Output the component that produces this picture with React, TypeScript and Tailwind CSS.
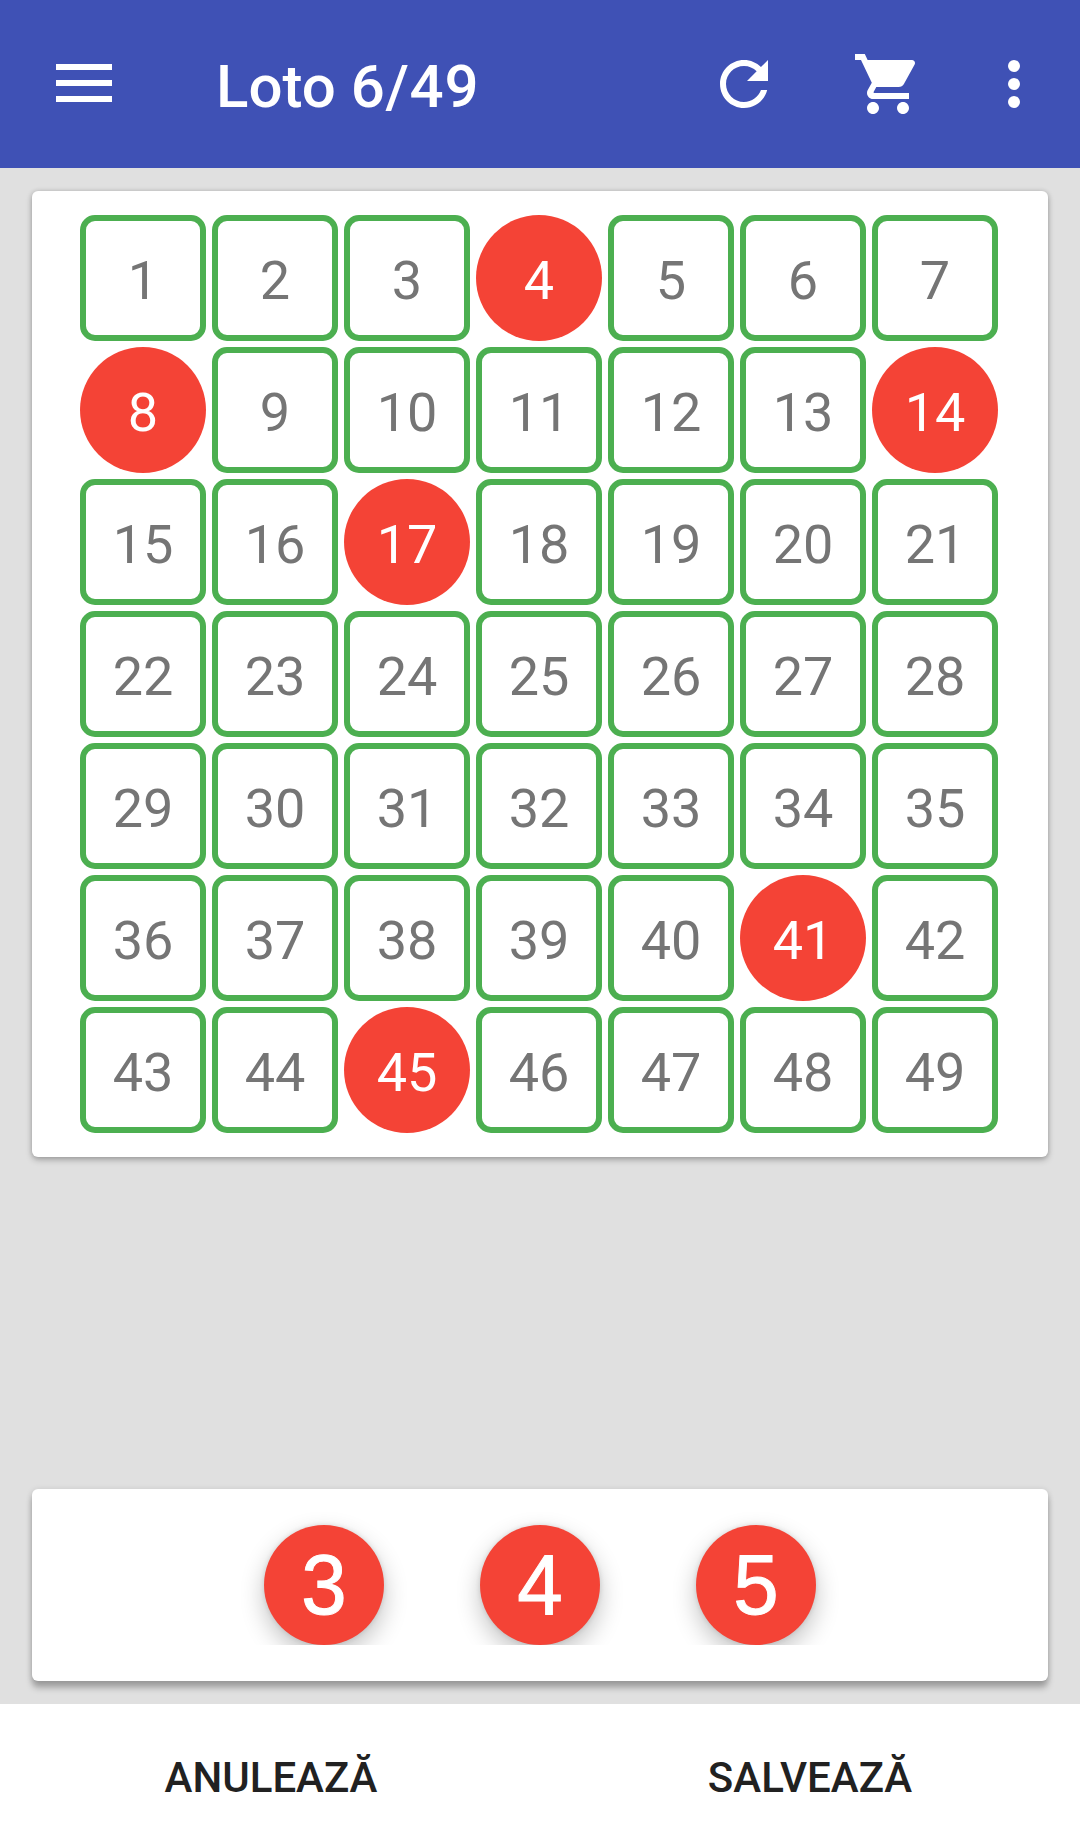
const picked = new Set([4, 8, 14, 17, 41, 45]);
const numbers = Array.from({ length: 49 }, (_, i) => i + 1);

function Cell({ value }: { value: number }) {
  return picked.has(value) ? (
    <button className="flex size-[126px] items-center justify-center rounded-full bg-[#f44336] pt-[5px] text-[54px] leading-none text-white">
      {value}
    </button>
  ) : (
    <button className="flex size-[126px] items-center justify-center rounded-[15px] border-[6px] border-[#4caf50] pt-[5px] text-[54px] leading-none text-[#757575]">
      {value}
    </button>
  );
}

function Ball({ value }: { value: number }) {
  return (
    <div className="flex h-[156px] w-[216px] items-end justify-center overflow-hidden">
      <button className="flex size-[120px] items-center justify-center rounded-full bg-[#f44336] pb-[2px] font-['Liberation_Sans',sans-serif] text-[86px] leading-none text-white shadow-[0_10px_24px_rgba(0,0,0,0.24),0_0_5px_rgba(0,0,0,0.12)] [-webkit-text-stroke:1px_white]">
        <span className="scale-x-[0.95]">{value}</span>
      </button>
    </div>
  );
}

export default function App() {
  return (
    <div className="flex h-[1848px] w-[1080px] flex-col bg-[#e0e0e0] font-[Roboto,sans-serif]">
      <header className="flex h-[168px] shrink-0 items-center bg-[#3f51b5] text-white">
        <button className="mb-[2px] ml-14 flex w-14 flex-col gap-[10px]">
          <span className="h-[6px] w-full bg-white" />
          <span className="h-[6px] w-full bg-white" />
          <span className="h-[6px] w-full bg-white" />
        </button>
        <h1 className="ml-[104px] grow pt-[5px] text-[60px] leading-none font-medium">
          Loto <span className="tracking-[0.7px]">6/49</span>
        </h1>
        <svg viewBox="0 0 24 24" className="size-[72px] fill-white">
          <path d="M17.65 6.35C16.2 4.9 14.21 4 12 4c-4.42 0-7.99 3.58-7.99 8s3.57 8 7.99 8c3.73 0 6.84-2.55 7.73-6h-2.08c-.82 2.33-3.04 4-5.65 4-3.31 0-6-2.69-6-6s2.69-6 6-6c1.66 0 3.14.69 4.22 1.78L13 11h7V4l-2.35 2.35z" />
        </svg>
        <svg viewBox="0 0 24 24" className="ml-[72px] size-[72px] fill-white">
          <path d="M7 18c-1.1 0-1.99.9-1.99 2S5.9 22 7 22s2-.9 2-2-.9-2-2-2zM1 2v2h2l3.6 7.59-1.35 2.45c-.16.28-.25.61-.25.96 0 1.1.9 2 2 2h12v-2H7.42c-.14 0-.25-.11-.25-.25l.03-.12.9-1.63h7.45c.75 0 1.41-.41 1.75-1.03l3.58-6.49c.08-.14.12-.31.12-.48 0-.55-.45-1-1-1H5.21l-.94-2H1zm16 16c-1.1 0-1.99.9-1.99 2s.89 2 1.99 2 2-.9 2-2-.9-2-2-2z" />
        </svg>
        <svg viewBox="0 0 24 24" className="mr-[30px] ml-[54px] size-[72px] fill-white">
          <circle cx="12" cy="6" r="2" />
          <circle cx="12" cy="12" r="2" />
          <circle cx="12" cy="18" r="2" />
        </svg>
      </header>

      <main className="flex grow flex-col justify-between px-8 pt-[23px] pb-[23px]">
        <section className="h-[966px] rounded-md bg-white pt-6 pl-12 shadow-[0_3px_6px_rgba(0,0,0,0.25),0_0_5px_rgba(0,0,0,0.14)]">
          <div className="grid w-[918px] grid-cols-7 gap-[6px]">
            {numbers.map((n) => (
              <Cell key={n} value={n} />
            ))}
          </div>
        </section>

        <section className="flex h-48 justify-center rounded-md bg-white shadow-[0_7px_6px_rgba(0,0,0,0.26),0_1px_6px_rgba(0,0,0,0.14)]">
          <Ball value={3} />
          <Ball value={4} />
          <Ball value={5} />
        </section>
      </main>

      <footer className="grid h-36 shrink-0 grid-cols-2 bg-white text-[42px] leading-none font-medium text-[#212121]">
        <button className="pt-1 pl-[2px]">ANULEAZĂ</button>
        <button className="pt-1">SALVEAZĂ</button>
      </footer>
    </div>
  );
}
